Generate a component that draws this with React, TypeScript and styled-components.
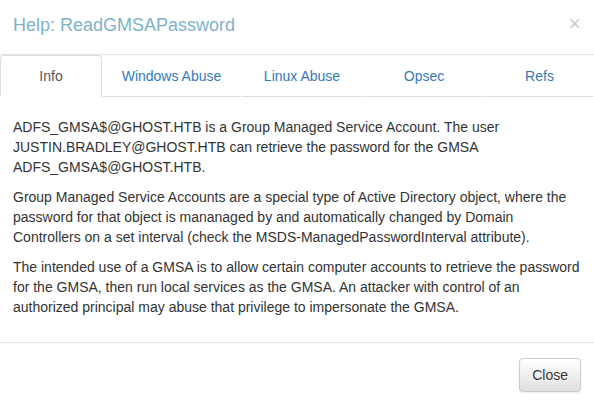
import React, { useState } from "react";
import styled, { createGlobalStyle } from "styled-components";

const Global = createGlobalStyle`
  html, body { margin: 0; padding: 0; background: #fff; overflow: hidden; }
  body {
    font-family: "Liberation Sans", Arial, Helvetica, sans-serif;
    font-size: 14px;
    line-height: 1.42857143;
    color: #333;
  }
  * { box-sizing: border-box; }
`;

const Modal = styled.div`
  margin: -2px 0 0 -2px;
  width: 598px;
  background: #fff;
`;

const Header = styled.div`
  display: flex;
  align-items: flex-start;
  justify-content: space-between;
  padding: 15px;
  border-bottom: 1px solid #e5e5e5;
`;

const Title = styled.h4`
  margin: 0;
  font-size: 18px;
  font-weight: 500;
  line-height: 1.42857143;
  color: #7eb2ca;
`;

const CloseX = styled.button`
  padding: 0;
  margin-top: 0;
  border: 0;
  background: transparent;
  font-family: "Liberation Sans", Arial, sans-serif;
  font-size: 22px;
  font-weight: normal;
  line-height: 1;
  color: #000;
  opacity: 0.2;
  text-shadow: 0 1px 0 #fff;
  cursor: pointer;
`;

const TabList = styled.ul`
  list-style: none;
  margin: 0 2px;
  padding: 0;
  display: grid;
  grid-template-columns: 102px 139px 122px 122px 109px;
`;

const Tab = styled.li<{ $active?: boolean }>`
  display: block;
  padding: 10px 0;
  text-align: center;
  line-height: 20px;
  border: 1px solid transparent;
  border-bottom-color: #ddd;
  border-radius: 4px 4px 0 0;
  color: #337ab7;
  cursor: pointer;
  ${(p) =>
    p.$active &&
    `
    color: #555;
    background: #fff;
    border-color: #ddd;
    border-bottom-color: transparent;
  `}
`;

const Body = styled.div`
  padding: 20px 15px 15px;
`;

const Para = styled.p`
  margin: 0 0 10px;
`;

const Footer = styled.div`
  display: flex;
  justify-content: flex-end;
  padding: 15px;
  border-top: 1px solid #e5e5e5;
`;

const Button = styled.button`
  font-family: "Liberation Sans", Arial, sans-serif;
  font-size: 14px;
  line-height: 1.42857143;
  padding: 6px 12px;
  color: #333;
  border: 1px solid #ccc;
  border-radius: 4px;
  background-image: linear-gradient(to bottom, #fff 0, #e0e0e0 100%);
  text-shadow: 0 1px 0 #fff;
  box-shadow: inset 0 1px 0 rgba(255, 255, 255, 0.15), 0 1px 1px rgba(0, 0, 0, 0.075);
  cursor: pointer;
`;

const tabs = ["Info", "Windows Abuse", "Linux Abuse", "Opsec", "Refs"];

export default function App() {
  const [active, setActive] = useState(0);
  return (
    <>
      <Global />
      <Modal>
        <Header>
          <Title>Help: ReadGMSAPassword</Title>
          <CloseX aria-label="Close">×</CloseX>
        </Header>
        <TabList>
          {tabs.map((t, i) => (
            <Tab key={t} $active={i === active} onClick={() => setActive(i)}>
              {t}
            </Tab>
          ))}
        </TabList>
        <Body>
          <Para>
            ADFS_GMSA$@GHOST.HTB is a Group Managed Service Account. The user
            JUSTIN.BRADLEY@GHOST.HTB can retrieve the password for the GMSA
            ADFS_GMSA$@GHOST.HTB.
          </Para>
          <Para>
            Group Managed Service Accounts are a special type of Active Directory
            object, where the password for that object is mananaged by and
            automatically changed by Domain Controllers on a set interval (check the
            MSDS-ManagedPasswordInterval attribute).
          </Para>
          <Para>
            The intended use of a GMSA is to allow certain computer accounts to
            retrieve the password for the GMSA, then run local services as the GMSA.
            An attacker with control of an authorized principal may abuse that
            privilege to impersonate the GMSA.
          </Para>
        </Body>
        <Footer>
          <Button>Close</Button>
        </Footer>
      </Modal>
    </>
  );
}
